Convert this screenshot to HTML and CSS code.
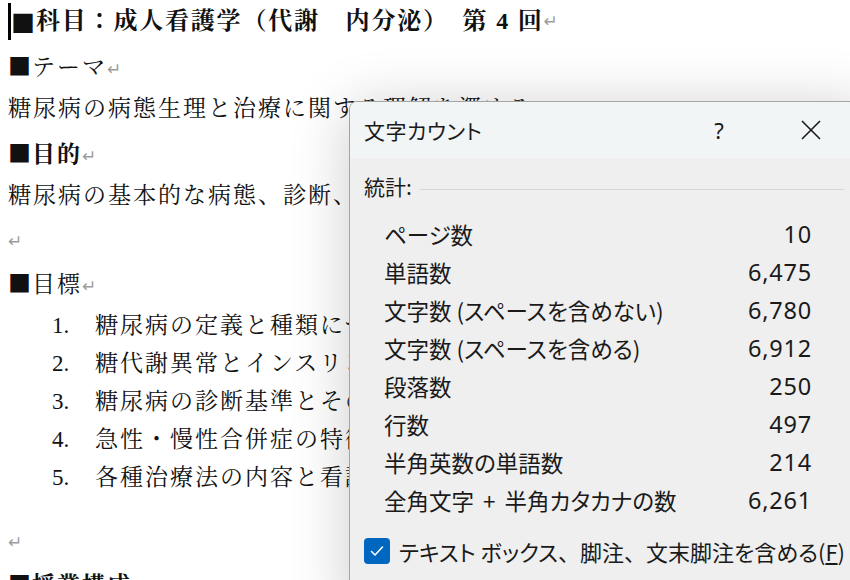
FILE: index.html
```html
<!DOCTYPE html>
<html lang="ja">
<head>
<meta charset="utf-8">
<link rel="stylesheet" href="styles.css">
</head>
<body>
<div class="doc">
  <p class="para heading"><span class="caret"></span><span class="sq">■</span>科目：成人看護学（代謝　内分泌）　第 4 回<span class="pm">↵</span></p>
  <p class="para"><span class="sq">■</span>テーマ<span class="pm">↵</span></p>
  <p class="para">糖尿病の病態生理と治療に関する理解を深める<span class="pm">↵</span></p>
  <p class="para bold"><span class="sq">■</span>目的<span class="pm">↵</span></p>
  <p class="para">糖尿病の基本的な病態、診断、治療を理解し、看護の役割を学ぶ<span class="pm">↵</span></p>
  <p class="para"><span class="pm">↵</span></p>
  <p class="para"><span class="sq">■</span>目標<span class="pm">↵</span></p>
  <ol class="goals">
    <li><span class="num">1.</span><span>糖尿病の定義と種類について説明できる</span></li>
    <li><span class="num">2.</span><span>糖代謝異常とインスリンの作用を理解する</span></li>
    <li><span class="num">3.</span><span>糖尿病の診断基準とその根拠を説明できる</span></li>
    <li><span class="num">4.</span><span>急性・慢性合併症の特徴を理解する</span></li>
    <li><span class="num">5.</span><span>各種治療法の内容と看護を説明できる</span></li>
  </ol>
  <p class="para"><span class="pm">↵</span></p>
  <p class="para bold"><span class="sq">■</span>授業構成<span class="pm">↵</span></p>
</div>

<div class="dialog">
  <div class="titlebar">
    <span class="title">文字カウント</span>
    <div class="tb-btns">
      <span class="tb-btn help">?</span>
      <span class="tb-btn close">
        <svg width="20" height="20" viewBox="0 0 20 20"><path d="M1 1 L19 19 M19 1 L1 19" stroke="#1a1a1a" stroke-width="1.6" fill="none"/></svg>
      </span>
    </div>
  </div>
  <div class="dbody">
    <div class="section">
      <span class="section-label">統計:</span>
      <span class="rule"></span>
    </div>
    <div class="stats">
      <span class="lbl">ページ数</span><span class="val">10</span>
      <span class="lbl">単語数</span><span class="val">6,475</span>
      <span class="lbl">文字数 (スペースを含めない)</span><span class="val">6,780</span>
      <span class="lbl">文字数 (スペースを含める)</span><span class="val">6,912</span>
      <span class="lbl">段落数</span><span class="val">250</span>
      <span class="lbl">行数</span><span class="val">497</span>
      <span class="lbl">半角英数の単語数</span><span class="val">214</span>
      <span class="lbl">全角文字 <span class="plus">+</span> 半角カタカナの数</span><span class="val">6,261</span>
    </div>
    <label class="check">
      <span class="box">
        <svg width="14" height="12" viewBox="0 0 14 12"><path d="M1.5 6.5 L5 10 L12.5 2" stroke="#fff" stroke-width="1.6" fill="none" stroke-linecap="round" stroke-linejoin="round"/></svg>
      </span>
      <span class="check-text">テキスト ボックス<span class="fw">、</span>脚注<span class="fw">、</span>文末脚注を含める(<u>F</u>)</span>
    </label>
  </div>
</div>
</body>
</html>
```

FILE: styles.css
```css
html, body {
  margin: 0;
  padding: 0;
  background: #ffffff;
  width: 850px;
  height: 580px;
  overflow: hidden;
}

.doc {
  padding-left: 8px;
  font-family: "Liberation Serif", "Noto Serif CJK JP", "Noto Sans CJK JP", serif;
  font-size: 23px;
  letter-spacing: 2px;
  color: #111;
}

.para {
  margin: 0;
  height: 43.5px;
  line-height: 43.5px;
  white-space: nowrap;
}

.sq {
  font-family: "Noto Sans CJK JP", sans-serif;
  letter-spacing: 1px;
}

.heading {
  font-weight: 700;
  font-size: 24px;
  letter-spacing: 1.8px;
  display: flex;
  align-items: center;
}

.bold {
  font-weight: 700;
}

.caret {
  display: inline-block;
  width: 3px;
  height: 37px;
  background: #000;
  flex: none;
}

.pm {
  color: #9c9c9c;
  font-size: 17px;
  font-weight: 400;
  font-family: "DejaVu Sans", sans-serif;
  letter-spacing: 0;
}

.goals {
  list-style: none;
  margin: 2px 0 22px 0;
  padding: 0 0 0 44px;
}

.goals li {
  display: flex;
  height: 38px;
  line-height: 38px;
  white-space: nowrap;
}

.goals .num {
  width: 43px;
  flex: none;
  letter-spacing: 0;
}

.dialog {
  position: absolute;
  left: 349px;
  top: 101px;
  width: 520px;
  height: 520px;
  border: 1px solid #a4a4a4;
  border-radius: 8px 8px 0 0;
  background: #efefef;
  box-shadow: 0 6px 60px rgba(0, 0, 0, 0.2);
  font-family: "Noto Sans CJK JP", "Noto Sans", sans-serif;
  color: #1a1a1a;
  overflow: hidden;
}

.titlebar {
  height: 56px;
  display: flex;
  align-items: center;
  padding-left: 14px;
  background: #f2f5f5;
}

.title {
  font-size: 21px;
  font-feature-settings: "palt";
  letter-spacing: 0.5px;
}

.tb-btns {
  margin-left: auto;
  margin-right: 36px;
  display: flex;
  gap: 46px;
}

.tb-btn {
  width: 46px;
  height: 40px;
  display: flex;
  align-items: center;
  justify-content: center;
}

.help {
  font-family: "Noto Sans", sans-serif;
  font-size: 22px;
}

.dbody {
  padding: 0 26px 0 14px;
}

.section {
  height: 56px;
  display: flex;
  align-items: center;
}

.section-label {
  font-size: 21px;
  font-feature-settings: "palt";
}

.rule {
  flex: 1;
  height: 1px;
  background: #d6d6d6;
  margin-left: 8px;
  margin-top: 6px;
}

.stats {
  margin: 1px 0 0 20px;
  width: 428px;
  display: grid;
  grid-template-columns: 1fr auto;
  grid-auto-rows: 38px;
  align-items: center;
}

.lbl {
  font-size: 22.5px;
  font-feature-settings: "palt";
  white-space: nowrap;
}

.plus {
  margin: 0 4px;
}

.val {
  font-family: "Noto Sans", sans-serif;
  font-size: 23.5px;
  letter-spacing: 0.8px;
  text-align: right;
}

.check {
  margin-top: 13px;
  height: 38px;
  display: flex;
  align-items: center;
}

.box {
  width: 26px;
  height: 26px;
  border-radius: 4px;
  background: #0067c0;
  display: flex;
  align-items: center;
  justify-content: center;
  flex: none;
}

.check-text {
  margin-left: 9px;
  font-size: 22px;
  font-feature-settings: "palt";
  white-space: nowrap;
}

.fw {
  font-feature-settings: normal;
}
```
